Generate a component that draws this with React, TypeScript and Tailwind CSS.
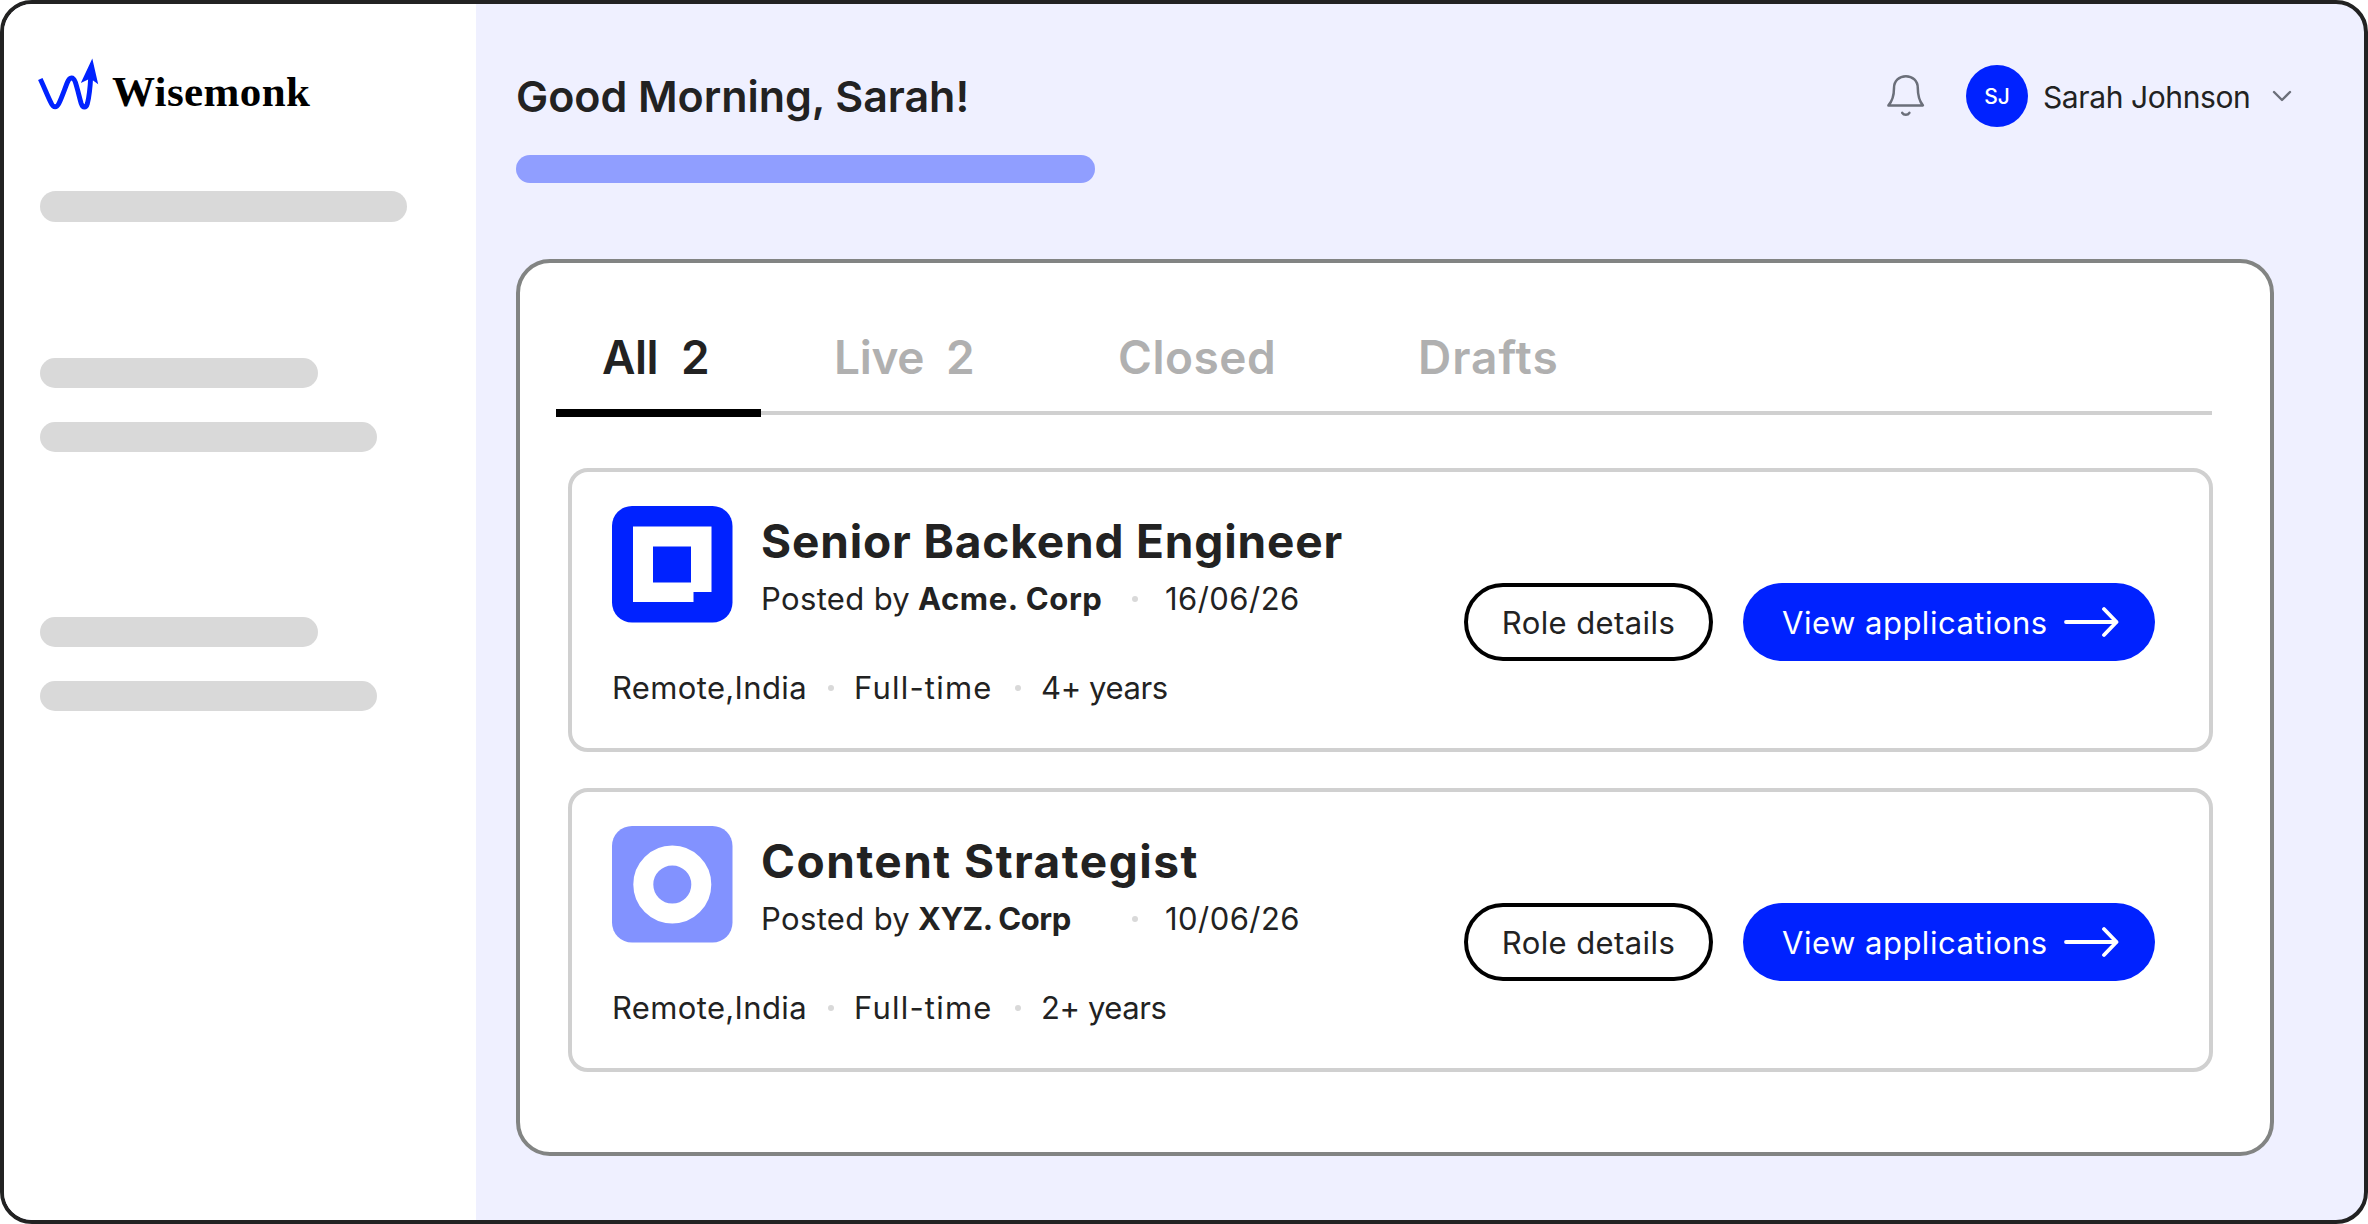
import type { ReactNode } from "react";

type Role = {
    title: string;
    titleClass: string;
    company: string;
    companyClass: string;
    posted: string;
    experience: string;
    logo: ReactNode;
};

const WisemonkMark = () => (
    <svg className="h-[56px] w-[66px] shrink-0" viewBox="36 56 66 56" fill="none">
        <path
            d="M40.3 79C44.5 88 48 97 51.2 103.2C53.5 108 56.7 108 59 103.2C62 97 64.5 89.5 67.3 82.5C69.8 76.5 73.2 76.5 75.3 82C77.6 89 79.3 97 81.2 103.5C82.8 108.3 86 108.3 87.4 103.5C89.3 96 90.2 87 90.7 77"
            stroke="#0022FF"
            strokeWidth="4.9"
        />
        <path d="M92.3 58.5L98.2 84.3L90.3 78.5L80.8 83Z" fill="#0022FF" />
    </svg>
);

const BellIcon = () => (
    <svg
        className="h-[44px] w-[40px]"
        viewBox="1885.8 74 40 44"
        fill="none"
        stroke="#6B6F7A"
        strokeWidth="2.5"
        strokeLinecap="round"
        strokeLinejoin="round"
    >
        <path d="M1893.8 88C1893.8 81 1899 76.2 1905.7 76.2S1917.6 81 1917.6 88C1917.6 97 1919.5 101.5 1922.7 105.4H1888.2C1891.8 101.5 1893.8 97 1893.8 88Z" />
        <path d="M1902 112.8C1903.6 115.5 1907.6 115.5 1909.2 112.8" />
    </svg>
);

const Arrow = () => (
    <svg
        className="h-[32px] w-[58px] shrink-0"
        viewBox="0 0 58 32"
        fill="none"
        stroke="white"
        strokeWidth="3.8"
        strokeLinecap="round"
        strokeLinejoin="round"
    >
        <path d="M5 16H55.5M43 3L55.5 16L43 29" />
    </svg>
);

const AcmeLogo = () => (
    <svg className="h-[117px] w-[121px] shrink-0" viewBox="0 0 121 117">
        <rect width="120.5" height="116.5" rx="20" fill="#0022FF" />
        <path d="M21 20.5H99.5V86H81.5V96H21Z" fill="white" />
        <path d="M41 40.5H79V76.5H41Z" fill="#0022FF" />
    </svg>
);

const XyzLogo = () => (
    <svg className="h-[117px] w-[121px] shrink-0" viewBox="0 0 121 117">
        <rect width="120.5" height="116.5" rx="20" fill="#8292FF" />
        <circle cx="60.3" cy="58.5" r="29" stroke="white" strokeWidth="20" fill="none" />
    </svg>
);

const Dot = () => <span className="size-[6px] shrink-0 rounded-full bg-[#d9d9d9]" />;

const roles: Role[] = [
    {
        title: "Senior Backend Engineer",
        titleClass: "tracking-[0.85px]",
        company: "Acme. Corp",
        companyClass: "tracking-[0.6px]",
        posted: "16/06/26",
        experience: "4+ years",
        logo: <AcmeLogo />,
    },
    {
        title: "Content Strategist",
        titleClass: "tracking-[1.5px]",
        company: "XYZ. Corp",
        companyClass: "tracking-[-0.5px]",
        posted: "10/06/26",
        experience: "2+ years",
        logo: <XyzLogo />,
    },
];

const RoleCard = ({ role }: { role: Role }) => (
    <div className="flex h-[284px] justify-between rounded-[20px] border-4 border-[#d0d0d0] pl-10 pr-[54px]">
        <div className="pt-[34px] text-[31px] leading-[30px]">
            <div className="flex h-[117px]">
                {role.logo}
                <div className="ml-[28px] pt-[12px]">
                    <h2 className={`text-[46px] font-bold leading-none whitespace-nowrap ${role.titleClass}`}>
                        {role.title}
                    </h2>
                    <div className="mt-[20px] flex items-center whitespace-nowrap">
                        <span className="w-[157px] tracking-[0.35px]">Posted by</span>
                        <span className={`w-[214px] font-bold ${role.companyClass}`}>
                            {role.company}
                        </span>
                        <Dot />
                        <span className="ml-[27px] tracking-[0.45px]">{role.posted}</span>
                    </div>
                </div>
            </div>
            <div className="mt-[50px] flex items-center whitespace-nowrap">
                <span className="w-[216px] tracking-[0.35px]">Remote,India</span>
                <Dot />
                <span className="ml-[20px] w-[161px] tracking-[1.2px]">Full-time</span>
                <Dot />
                <span className="ml-[20px] tracking-[-0.4px]">{role.experience}</span>
            </div>
        </div>
        <div className="flex gap-[30px] pt-[111px] text-[31px] leading-none whitespace-nowrap">
            <button className="flex h-[78px] w-[249px] items-center justify-center rounded-full border-4 border-black pt-px tracking-[0.4px]">
                Role details
            </button>
            <button className="flex h-[78px] w-[412px] items-center rounded-full bg-[#0022ff] pl-[39px] text-left text-white">
                <span className="w-[279px] pt-px tracking-[0.5px]">View applications</span>
                <Arrow />
            </button>
        </div>
    </div>
);

const Sidebar = () => (
    <aside className="w-[472px] shrink-0 bg-white pl-[36px] pt-[52px]">
        <div className="-ml-1 flex h-[56px] items-end">
            <WisemonkMark />
            <span className="ml-[10px] font-['Liberation_Serif',serif] text-[43px] font-bold leading-[40px] tracking-[0.4px] text-black">
                Wisemonk
            </span>
        </div>
        <div className="mt-[79px] h-[31px] w-[367px] rounded-full bg-[#d9d9d9]" />
        <div className="mt-[136px] h-[30px] w-[278px] rounded-full bg-[#d9d9d9]" />
        <div className="mt-[34px] h-[30px] w-[337px] rounded-full bg-[#d9d9d9]" />
        <div className="mt-[165px] h-[30px] w-[278px] rounded-full bg-[#d9d9d9]" />
        <div className="mt-[34px] h-[30px] w-[337px] rounded-full bg-[#d9d9d9]" />
    </aside>
);

const Header = () => (
    <header className="flex h-[62px] items-center whitespace-nowrap">
        <h1 className="w-[1370px] text-[43px] font-semibold leading-none tracking-[-0.05px]">
            Good Morning, Sarah!
        </h1>
        <BellIcon />
        <div className="ml-[40px] flex size-[62px] items-center justify-center rounded-full bg-[#0022ff] text-[21px] font-medium leading-none text-white">
            SJ
        </div>
        <span className="ml-[15px] w-[229px] pt-[2px] text-[30px] leading-none tracking-[-0.4px]">
            Sarah Johnson
        </span>
        <svg
            className="h-[12px] w-[20px]"
            viewBox="0 0 20 12"
            fill="none"
            stroke="#6B6F7A"
            strokeWidth="2.4"
            strokeLinecap="round"
            strokeLinejoin="round"
        >
            <path d="M2 2L10 10L18 2" />
        </svg>
    </header>
);

const Tabs = () => (
    <nav className="ml-9 flex h-[112px] w-[1656px] border-b-4 border-[#d0d0d0] text-[46px] font-semibold leading-none whitespace-nowrap text-[#b0b0b0]">
        <div className="-mb-1.5 flex h-[114px] w-[205px] items-center border-b-8 border-black pl-[46px] pt-[2px] text-[#222]">
            <span className="w-[79px] tracking-[-0.5px]">All</span>
            <span>2</span>
        </div>
        <div className="flex h-[108px] w-[357px] items-center pl-[73px]">
            <span className="w-[112px] tracking-[-0.3px]">Live</span>
            <span>2</span>
        </div>
        <div className="flex h-[108px] w-[300px] items-center tracking-[0.5px]">Closed</div>
        <div className="flex h-[108px] items-center tracking-[1px]">Drafts</div>
    </nav>
);

const App = () => {
    return (
        <div className="flex h-[1224px] w-[2368px] overflow-hidden rounded-[32px] border-4 border-[#222] bg-[#eff0ff] font-['Inter',sans-serif] text-[#222]">
            <Sidebar />
            <main className="pl-10 pt-[61px]">
                <Header />
                <div className="mt-7 h-7 w-[579px] rounded-full bg-[#909eff]" />
                <section className="mt-[76px] h-[897px] w-[1758px] rounded-[34px] border-4 border-[#828483] bg-white pt-10">
                    <Tabs />
                    <div className="ml-12 mt-[53px] flex w-[1645px] flex-col gap-9">
                        {roles.map((role) => (
                            <RoleCard key={role.title} role={role} />
                        ))}
                    </div>
                </section>
            </main>
        </div>
    );
};

export default App;
